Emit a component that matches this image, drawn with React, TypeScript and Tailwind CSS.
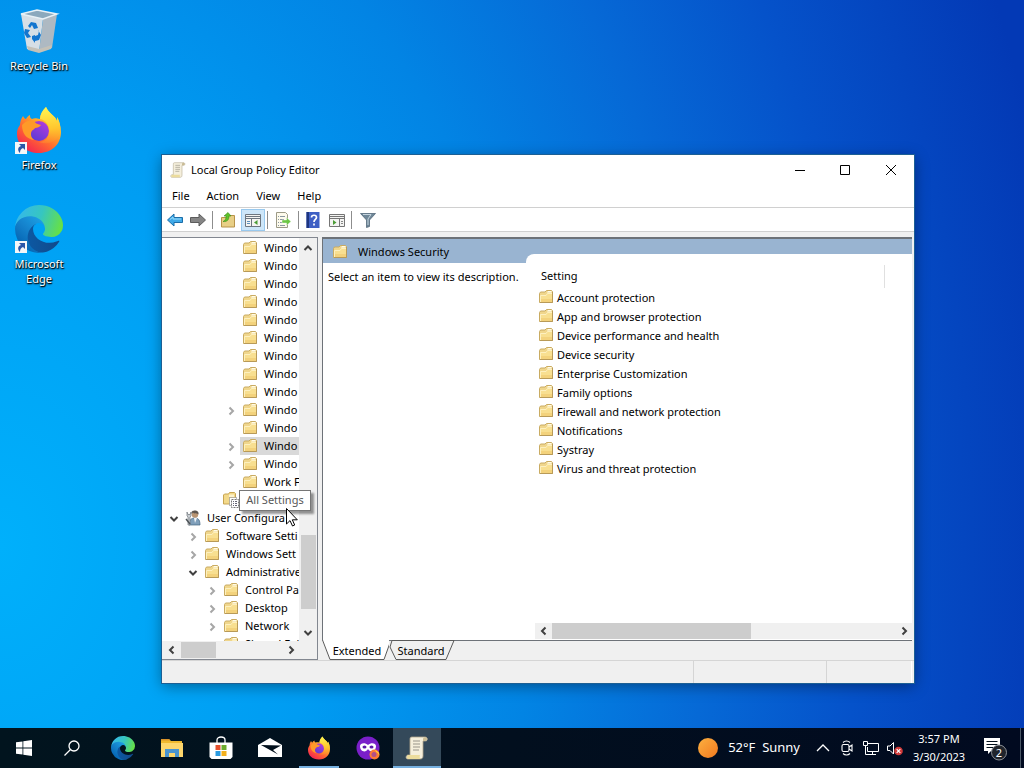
import React from "react";

type IconProps = { className?: string };

const FolderIcon: React.FC<IconProps> = ({ className }) => (
  <svg viewBox="0 0 16 16" className={className} aria-hidden="true">
    <path d="M1.500 13.500V4.500L2.500 3H7l1.500-1.500h5l1 1v11z" fill="#f0d68c" stroke="#c9ab62" />
    <path d="M9 3.500 10 2h3.500v1.500z" fill="#fffbe8" />
    <path d="M2 6h6l1.500-2H14v9H2z" fill="#f8df90" />
    <path d="M2 10h12v3H2z" fill="#f3d27c" />
    <path d="M2.500 13V6.500H8L9.500 4.500H14" fill="none" stroke="#fdf0bf" />
    <path d="M2 13.500h12.500V3" fill="none" stroke="#b89a58" />
  </svg>
);

const AllSettingsIcon: React.FC<IconProps> = ({ className }) => (
  <svg viewBox="0 0 16 16" className={className} aria-hidden="true">
    <path d="M.5 12V3l1-1h4l1-1.500h5l1 1v10.500z" fill="#f3d98a" stroke="#c8a552" />
    <path d="M6 2.500h5V5H6z" fill="#fdf3cc" />
    <path d="M6.500 5.500h7v8h-7z" fill="#fff" stroke="#777" strokeDasharray="1 1" />
    <path d="M8.500 7.500h7v8h-7z" fill="#fff" stroke="#777" strokeDasharray="2 1" />
    <path d="M10 9.500h1m1 0h2m-4 2h1m1 0h2m-4 2h1m1 0h2" stroke="#667" />
  </svg>
);

const UserIcon: React.FC<IconProps> = ({ className }) => (
  <svg viewBox="0 0 16 16" className={className} aria-hidden="true">
    <path d="M4 15c0-5 2-7 6-7s5 3 5 7z" fill="#7f9fba" stroke="#44647f" strokeWidth=".7" />
    <path d="m9 8 1 5 2-5z" fill="#f0f4f8" />
    <circle cx="10" cy="4.500" r="3.200" fill="#b99573" />
    <path d="M6.500 4C6 1 8 .5 10 .5s4 1 3.500 4C12.500 3 9 4 8 2.500z" fill="#5d5650" />
    <path d="M2 2v4l1 1v8h2V7l1-1V2L5 4.500H3z" fill="#c9ced3" stroke="#70777d" strokeWidth=".7" />
    <path d="M1 9l4 5" stroke="#4d5357" strokeWidth="1.500" />
  </svg>
);

const ScrollIcon: React.FC<IconProps> = ({ className }) => (
  <svg viewBox="0 0 24 24" className={className} aria-hidden="true">
    <path d="M7 1h13c3 0 3 4 .5 4H18v15c0 2-1 3-3 3H3c-3 0-2-4 0-4h2V4c0-2 0-3 2-3z" fill="#f5efdc" stroke="#b0a58a" strokeWidth=".8" />
    <path d="M18 5V3c0-2 4-2.500 4 0 0 1.500-1 2-2 2z" fill="#c9bb95" />
    <path d="M2 21c0-1.500 1-2 2-2h11c-1 2 0 4 1 4H4c-1 0-2-.5-2-2z" fill="#ecdc9c" />
    <path d="M8 5h7M8 8h7M8 11h7M8 14h6" stroke="#99958a" />
  </svg>
);

const EdgeIcon: React.FC<IconProps & { id: string }> = ({ className, id }) => (
  <svg viewBox="0 0 256 256" className={className} aria-hidden="true">
    <defs>
      <linearGradient id={`${id}-a`} x1="63" y1="177" x2="241" y2="177" gradientUnits="userSpaceOnUse">
        <stop offset="0" stopColor="#0c59a4" />
        <stop offset="1" stopColor="#114a8b" />
      </linearGradient>
      <linearGradient id={`${id}-b`} x1="157" y1="100" x2="45" y2="221" gradientUnits="userSpaceOnUse">
        <stop offset="0" stopColor="#1b9de2" />
        <stop offset=".5" stopColor="#1582cc" />
        <stop offset="1" stopColor="#0667b5" />
      </linearGradient>
      <linearGradient id={`${id}-c`} x1="20" y1="60" x2="245" y2="135" gradientUnits="userSpaceOnUse">
        <stop offset="0" stopColor="#35b9e8" />
        <stop offset=".5" stopColor="#36c6c0" />
        <stop offset="1" stopColor="#66e047" />
      </linearGradient>
    </defs>
    <g transform="translate(-4.630 -4.920)">
      <path fill={`url(#${id}-a)`} d="M235.680 195.460a93.730 93.730 0 0 1-10.540 4.710 101.870 101.870 0 0 1-35.900 6.460c-47.320 0-88.540-32.550-88.540-74.320A31.480 31.480 0 0 1 117.130 105c-42.800 1.800-53.800 46.400-53.800 72.530 0 73.880 68.090 81.370 82.760 81.370 7.910 0 19.840-2.300 27-4.560l1.310-.44A128.340 128.340 0 0 0 241 200.100a4 4 0 0 0-5.320-4.640z" />
      <path fill={`url(#${id}-b)`} d="M110.340 246.340A79.200 79.200 0 0 1 87.600 225a80.720 80.720 0 0 1 29.530-120c3.120-1.470 8.450-4.130 15.540-4a32.350 32.350 0 0 1 25.690 13 31.880 31.880 0 0 1 6.360 18.660c0-.21 24.460-79.600-80-79.600-43.900 0-80 41.660-80 78.210a130.150 130.150 0 0 0 12.110 56 128 128 0 0 0 156.380 67.110 75.550 75.550 0 0 1-62.780-8z" />
      <path fill={`url(#${id}-c)`} d="M156.940 153.780c-.81 1.050-3.300 2.500-3.300 5.660 0 2.610 1.700 5.120 4.720 7.230 14.380 10 41.490 8.680 41.560 8.680a59.560 59.560 0 0 0 30.270-8.350 61.380 61.380 0 0 0 30.440-52.870c.26-22.410-8-37.310-11.340-43.910C228.080 28.760 182.310 4.920 132.650 4.920a128 128 0 0 0-128 126.200c.48-36.540 36.800-66.050 80-66.050 3.500 0 23.460.34 42 10.070 16.340 8.580 24.900 18.940 30.850 29.210 6.180 10.670 7.280 24.150 7.280 29.520s-2.780 13.330-7.840 19.910z" />
    </g>
  </svg>
);

const FirefoxIcon: React.FC<IconProps & { id: string }> = ({ className, id }) => (
  <svg viewBox="0 0 48 48" className={className} aria-hidden="true">
    <defs>
      <linearGradient id={`${id}-a`} x1="40" y1="4" x2="12" y2="44" gradientUnits="userSpaceOnUse">
        <stop offset="0" stopColor="#fff44f" />
        <stop offset=".35" stopColor="#ffb02a" />
        <stop offset=".65" stopColor="#ff6a30" />
        <stop offset="1" stopColor="#f5284f" />
      </linearGradient>
      <linearGradient id={`${id}-b`} x1="30" y1="15" x2="18" y2="34" gradientUnits="userSpaceOnUse">
        <stop offset="0" stopColor="#b33bdc" />
        <stop offset="1" stopColor="#5b3bd6" />
      </linearGradient>
      <linearGradient id={`${id}-c`} x1="32" y1="2" x2="38" y2="44" gradientUnits="userSpaceOnUse">
        <stop offset="0" stopColor="#fff44f" />
        <stop offset=".5" stopColor="#ffc62e" />
        <stop offset="1" stopColor="#ff7a2b" stopOpacity="0" />
      </linearGradient>
    </defs>
    <path fill={`url(#${id}-a)`} d="M31 1c-4 4-6 8-6 12-4-1-6-1-8 0-2-1-2-2-2-4-2 1-3 2-4 4-1 0-2-1-3-3-2 3-3 6-3 9-3 4-3 7-3 9 0 11 9 19 22 19s22-9 22-21c0-6-2-11-4-14v4C41 10 33 7 31 1z" />
    <circle cx="24" cy="25" r="10" fill={`url(#${id}-b)`} />
    <path fill="#ff9a28" d="M7 19c3-4 7-5 12-4 1 2 3 3 7 4-1 2-4 3-6 3-1 2-4 2-4 6 0 3 1 4 3 6C11 33 7 27 7 19z" />
    <path fill={`url(#${id}-c)`} d="M31 1c-4 4-6 8-6 12 6 1 9 6 9 12 0 7-4 11-10 11 11 4 20-2 21-11 1-6-1-11-3-14v4C41 10 33 7 31 1z" />
  </svg>
);

const RecycleBinIcon: React.FC<IconProps> = ({ className }) => (
  <svg viewBox="0 0 48 48" className={className} aria-hidden="true">
    <path d="M6 7 28 12 24 45 12 42z" fill="#d6dfe6" />
    <path d="m28 12 14-5-5 34-13 4z" fill="#aeb9c2" />
    <path d="m6 7 16-4 20 4-14 5z" fill="#8ba9bd" stroke="#e8f1f6" strokeWidth="1.500" />
    <path d="m12 39 12 3 13-4-1 4-12 4-11-3z" fill="#c4c1b8" />
    <g fill="#1376cf">
      <path d="m13 19 3-4 5 1 2 5-4 1-2-4-2 3z" />
      <path d="m10 22 5 1-2 3 3 4-4 1-3-5z" />
      <path d="m17 29 3-1v1l3-1 1-4-1-1 3 5-2 5-4 1v2l-3-4z" />
    </g>
  </svg>
);

const ShortcutArrow: React.FC = () => (
  <svg viewBox="0 0 12 12" className="absolute bottom-0 left-0 size-3" aria-hidden="true">
    <path d="M0 0h12v12H0z" fill="#f4f6f8" />
    <path d="M4 2h6v6L8 6c-2 1-3 2-3 5-3-3-2-6 1-7z" fill="#2a56a8" />
  </svg>
);

type ChevronProps = { dir: "left" | "right" | "up" | "down"; faded?: boolean };

const chevronPaths = {
  left: "M6.500 1.500 3 5l3.500 3.500",
  right: "M3.500 1.500 7 5 3.500 8.500",
  up: "M1.500 7 5 3.500 8.500 7",
  down: "M1.500 3 5 6.500 8.500 3",
};

const Chevron: React.FC<ChevronProps> = ({ dir, faded }) => (
  <svg viewBox="0 0 10 10" className="size-[10px]" aria-hidden="true">
    <path d={chevronPaths[dir]} fill="none" stroke={faded ? "#a6a6a6" : "#404040"} strokeWidth="2" />
  </svg>
);

interface TreeNode {
  label: string;
  level: number;
  state?: "open" | "closed";
  icon?: "user" | "all";
  selected?: boolean;
}

const windo: TreeNode = { label: "Windo", level: 3 };

const treeNodes: TreeNode[] = [
  windo,
  windo,
  windo,
  windo,
  windo,
  windo,
  windo,
  windo,
  windo,
  { ...windo, state: "closed" },
  windo,
  { ...windo, state: "closed", selected: true },
  { ...windo, state: "closed" },
  { label: "Work F", level: 3 },
  { label: "All Settings", level: 2, icon: "all" },
  { label: "User Configura", level: 0, state: "open", icon: "user" },
  { label: "Software Setti", level: 1, state: "closed" },
  { label: "Windows Sett", level: 1, state: "closed" },
  { label: "Administrative", level: 1, state: "open" },
  { label: "Control Pa", level: 2, state: "closed" },
  { label: "Desktop", level: 2, state: "closed" },
  { label: "Network", level: 2, state: "closed" },
  { label: "Shared Fol", level: 2 },
];

const indents = ["pl-[2px]", "pl-[21px]", "pl-[40px]", "pl-[59px]"];

const settings = [
  "Account protection",
  "App and browser protection",
  "Device performance and health",
  "Device security",
  "Enterprise Customization",
  "Family options",
  "Firewall and network protection",
  "Notifications",
  "Systray",
  "Virus and threat protection",
];

const TreeRow: React.FC<{ node: TreeNode }> = ({ node }) => (
  <li className={`flex h-[18px] shrink-0 whitespace-nowrap ${indents[node.level]}`}>
    <span className="flex w-[19px] shrink-0 items-center justify-center pt-[2px]">
      {node.state && <Chevron dir={node.state === "open" ? "down" : "right"} faded={node.state === "closed"} />}
    </span>
    <span className={`flex flex-1 items-center gap-[6px] pl-[2px] ${node.selected ? "bg-[#d9d9d9]" : ""}`}>
      {node.icon === "user" ? (
        <UserIcon className="size-4 shrink-0" />
      ) : node.icon === "all" ? (
        <AllSettingsIcon className="size-4 shrink-0" />
      ) : (
        <FolderIcon className="size-4 shrink-0" />
      )}
      {/* the tooltip shows this row's label in full */}
      {node.icon !== "all" && node.label}
    </span>
  </li>
);

const ToolbarSeparator = () => <span className="mx-[2px] h-[18px] w-px bg-[#8d8d8d]" />;

const Toolbar: React.FC = () => (
  <div className="flex h-[25px] shrink-0 items-center border-y border-[#d0d0d0] bg-white px-[2px] pt-px">
    <button aria-label="Back" className="flex w-[22px] justify-center">
      <svg viewBox="0 0 16 16" className="size-4">
        <path d="M.5 8 7 2v3.500h8.500v5H7V14z" fill="#3fa9e8" stroke="#1b6da8" />
        <path d="m3 7.500 3-2.500v2h8" fill="none" stroke="#9bdcfa" />
      </svg>
    </button>
    <button aria-label="Forward" className="flex w-6 justify-center">
      <svg viewBox="0 0 16 16" className="size-4">
        <path d="M15.500 8 9 2v3.500H.5v5H9V14z" fill="#858585" stroke="#5c5c5c" />
      </svg>
    </button>
    <ToolbarSeparator />
    <button aria-label="Up one level" className="flex w-[26px] justify-center">
      <svg viewBox="0 0 16 16" className="size-4">
        <path d="M1.500 15V5.500H7l1.500-2h6V15z" fill="#e8cf86" stroke="#b8934a" />
        <path d="M3 9.500C6 8 6 6 6 4H4l4-3.500L11 4H9c0 3-1 6-6 5.500z" fill="#5ec22a" stroke="#3a8d18" strokeWidth=".6" />
      </svg>
    </button>
    <button aria-label="Show/Hide Console Tree" className="flex h-[22px] w-6 items-center justify-center border border-[#99c9ee] bg-[#cde6f9]">
      <svg viewBox="0 0 16 16" className="size-4">
        <path d="M.5 2.500h15v12H.5z" fill="#f4f4f2" stroke="#6d7680" />
        <path d="M1 4.500h14M1 6.500h14M6.500 7v7" stroke="#6d7680" />
        <path d="M2 9.500h3m-3 2h3" stroke="#5c90bd" />
        <path d="M12.500 8v5L9 10.500z" fill="#4b9c35" />
      </svg>
    </button>
    <ToolbarSeparator />
    <button aria-label="Export List" className="flex w-[26px] justify-center">
      <svg viewBox="0 0 16 16" className="size-4">
        <path d="M1.500.500h9l2 2v13h-11z" fill="#fdfaec" stroke="#9c9a86" />
        <path d="M3 4.500h1m1 0h5m-7 3h1m1 0h4m-6 3h1m1 0h4m-6 3h1m1 0h5" stroke="#8a97a0" />
        <path d="M7 8h4.500V5.500L16 9.500l-4.500 4V11H7z" fill="#6cc644" stroke="#fff" strokeWidth=".4" />
      </svg>
    </button>
    <ToolbarSeparator />
    <button aria-label="Help" className="flex w-6 justify-center">
      <svg viewBox="0 0 16 16" className="size-4">
        <path d="M1.500 0h13v16h-13z" fill="#3f60c4" />
        <path d="M1.500 0h2.500v16H1.500z" fill="#1d3580" />
        <path d="M6.500 5.500c0-3 5-3 5 0 0 2-2.500 2-2.500 4.500M9 11.500v2" fill="none" stroke="#fff" strokeWidth="1.700" />
      </svg>
    </button>
    <button aria-label="Show/Hide Action Pane" className="flex w-6 justify-center">
      <svg viewBox="0 0 16 16" className="size-4">
        <path d="M.5 2.500h15v12H.5z" fill="#f4f4f2" stroke="#757575" />
        <path d="M1 4.500h14M1 6.500h14M10.500 7v7" stroke="#757575" />
        <path d="M12 9.500h2m-2 2h2" stroke="#888" />
        <path d="M4 8v5l3.500-2.500z" fill="#4b9c35" />
      </svg>
    </button>
    <ToolbarSeparator />
    <button aria-label="Filter" className="flex w-[28px] justify-center">
      <svg viewBox="0 0 16 16" className="size-4">
        <path d="M.5 1.500h15L9.500 8v6.500l-3 1V8z" fill="#6f8798" stroke="#53687a" strokeWidth=".8" />
        <path d="M3 2.500h8L8 7v6" fill="none" stroke="#c5d4de" />
      </svg>
    </button>
  </div>
);

const TreePane: React.FC = () => (
  <div className="relative flex w-[156px] shrink-0 flex-col border-y border-r border-[#828790] bg-white">
    <div className="flex min-h-0 flex-1">
      <ul className="flex min-w-0 flex-1 flex-col overflow-hidden pt-px">
        {treeNodes.map((node, i) => (
          <TreeRow key={i} node={node} />
        ))}
      </ul>
      <div className="flex w-[18px] flex-col items-center bg-[#f0f0f0]">
        <button aria-label="Scroll up" className="flex h-5 items-center">
          <Chevron dir="up" />
        </button>
        <div className="w-[15px] flex-[278]" />
        <div className="w-[15px] flex-[74] bg-[#cdcdcd]" />
        <div className="w-[15px] flex-[16]" />
        <button aria-label="Scroll down" className="flex h-4 items-center">
          <Chevron dir="down" />
        </button>
      </div>
    </div>
    <div className="flex h-[18px] items-center bg-[#f0f0f0]">
      <button aria-label="Scroll left" className="flex h-full w-[19px] items-center justify-center">
        <Chevron dir="left" />
      </button>
      <div className="h-4 w-[35px] bg-[#cdcdcd]" />
      <div className="flex-1" />
      <button aria-label="Scroll right" className="mr-[17px] flex h-full w-[18px] items-center justify-center">
        <Chevron dir="right" />
      </button>
    </div>
    <div role="tooltip" className="absolute top-[252px] left-[77px] flex h-[21px] w-[72px] items-center justify-center border border-[#767676] bg-white pb-[2px] whitespace-nowrap text-[#575757] shadow-[3px_3px_2px_rgba(0,0,0,0.4)]">
      All Settings
    </div>
    <svg viewBox="0 0 12 19" className="absolute top-[270px] left-[124px] h-[19px] w-3" aria-hidden="true">
      <path d="M.5.500v15.500l3.500-3.400 2.500 5.400 2.200-1-2.400-5.200h5z" fill="#fff" stroke="#000" />
    </svg>
  </div>
);

const DetailPane: React.FC = () => (
  <div className="flex min-w-0 flex-1 flex-col">
    <div className="flex min-h-0 flex-1 border-t-2 border-l border-[#6d7278] bg-white">
      <section className="w-[203px] shrink-0 whitespace-nowrap">
        <h2 className="flex h-[24px] items-center gap-[10px] bg-[#99b4d1] pt-px pl-[9px]">
          <FolderIcon className="size-4" />
          Windows Security
        </h2>
        <p className="py-[6px] pl-[5px]">Select an item to view its description.</p>
      </section>
      <section className="flex min-w-0 flex-1 flex-col bg-[#99b4d1] pt-[15px]">
        <div className="flex flex-1 flex-col rounded-tl-lg bg-white pt-[11px] pl-[9px]">
          <table className="w-full text-left">
            <thead>
              <tr className="h-[23px]">
                <th className="border-r border-[#e0e0e0] pb-[2px] pl-[6px] font-normal">Setting</th>
                <th className="w-[28px]" aria-label="State" />
              </tr>
            </thead>
            <tbody>
              {settings.map((name) => (
                <tr key={name} className="h-[19px]">
                  <td colSpan={2}>
                    <span className="flex items-center gap-[3px] pl-[3px]">
                      <FolderIcon className="mb-[2px] size-4" />
                      {name}
                    </span>
                  </td>
                </tr>
              ))}
            </tbody>
          </table>
          <div className="mt-auto mb-px flex h-4 items-center bg-[#f0f0f0]">
            <button aria-label="Scroll left" className="flex h-full w-[17px] items-center justify-center">
              <Chevron dir="left" />
            </button>
            <div className="h-full flex-[199] bg-[#cdcdcd]" />
            <div className="flex-[144]" />
            <button aria-label="Scroll right" className="flex h-full w-[17px] items-center justify-center">
              <Chevron dir="right" />
            </button>
          </div>
        </div>
      </section>
    </div>
    <div role="tablist" className="flex h-[20px] border-t border-[#6d7278]">
      <button role="tab" aria-selected="true" className="relative -mt-px flex h-5 w-[67px] items-center justify-center">
        <svg viewBox="0 0 67 20" className="absolute inset-0 size-full" aria-hidden="true">
          <path d="M0 0h69l-7 19.500H8z" fill="#fff" />
          <path d="M.5 0 8 19.500h54L69 0" fill="none" stroke="#5a5a5a" />
        </svg>
        <span className="relative pt-[2px] pl-[3px]">Extended</span>
      </button>
      <button role="tab" aria-selected="false" className="relative -mt-px flex h-5 w-[66px] items-center justify-center">
        <svg viewBox="0 0 66 20" className="absolute inset-0 size-full" aria-hidden="true">
          <path d="M3 .500 1 7l6 12.500h50L65 .500z" fill="#f0f0f0" stroke="#5a5a5a" />
        </svg>
        <span className="relative pt-[2px] pr-[2px]">Standard</span>
      </button>
    </div>
  </div>
);

const PolicyWindow: React.FC = () => (
  <main className="absolute top-[155px] right-[110px] bottom-[45px] left-[162px] flex flex-col bg-[#f0f0f0] text-[11px] leading-4 text-black shadow-[0_0_0_1px_#1c5f94,0_3px_14px_rgba(0,0,0,0.4)]">
    <header className="flex h-[30px] shrink-0 items-center bg-white pl-2">
      <ScrollIcon className="mr-[5px] size-4" />
      <h1>Local Group Policy Editor</h1>
      <div className="ml-auto flex h-full">
        <button aria-label="Minimize" className="flex w-[45px] items-center justify-center">
          <svg viewBox="0 0 10 10" className="size-[10px]">
            <path d="M0 5.500h10" stroke="#000" />
          </svg>
        </button>
        <button aria-label="Maximize" className="flex w-[46px] items-center justify-center">
          <svg viewBox="0 0 10 10" className="size-[10px]">
            <path d="M.5.500h9v9h-9z" fill="none" stroke="#000" />
          </svg>
        </button>
        <button aria-label="Close" className="flex w-[46px] items-center justify-center">
          <svg viewBox="0 0 10 10" className="size-[10px]">
            <path d="m0 0 10 10M10 0 0 10" stroke="#000" />
          </svg>
        </button>
      </div>
    </header>
    <nav className="flex h-[22px] shrink-0 items-center gap-[17px] bg-white pl-[10px]">
      <button>File</button>
      <button>Action</button>
      <button>View</button>
      <button>Help</button>
    </nav>
    <Toolbar />
    <div className="mt-[5px] flex min-h-0 flex-1 gap-[4px] pr-[2px]">
      <TreePane />
      <DetailPane />
    </div>
    <footer className="flex h-[23px] shrink-0 border-t border-[#d5d5d5]">
      <span className="flex-1 border-r border-[#d5d5d5]" />
      <span className="w-[133px] border-r border-[#d5d5d5]" />
      <span className="mr-[2px] w-[85px] border-r border-white" />
    </footer>
  </main>
);

const DesktopIcon: React.FC<{ label: string; shortcut?: boolean; children: React.ReactNode }> = ({ label, shortcut, children }) => (
  <li className="h-[99px]">
    <button className="flex w-[76px] flex-col items-center">
      <span className="relative size-12">
        {children}
        {shortcut && <ShortcutArrow />}
      </span>
      <span className="mt-[3px] w-[70px] text-center text-[11px] leading-[15px] text-white [text-shadow:0_1px_2px_#000,1px_1px_1px_#000]">
        {label}
      </span>
    </button>
  </li>
);

const taskButton = "relative flex h-full w-[49px] items-center justify-center";

const Taskbar: React.FC = () => (
  <footer className="flex h-10 shrink-0 items-center bg-linear-to-r from-[#01141e] via-[#020f1e] to-[#010a20] text-white">
    <button aria-label="Start" className="flex h-full w-12 items-center justify-center">
      <svg viewBox="0 0 16 16" className="size-4" fill="#fff">
        <path d="m0 2.300 6.500-.9v6.200H0zM7.300 1.300 16 0v7.600H7.300zM0 8.400h6.500v6.200L0 13.700zM7.300 8.400H16V16l-8.700-1.200z" />
      </svg>
    </button>
    <button aria-label="Search" className="mr-[2px] flex h-full w-12 items-center justify-center">
      <svg viewBox="0 0 16 16" className="size-4" fill="none" stroke="#fff" strokeWidth="1.300">
        <circle cx="10" cy="6" r="5" />
        <path d="M6.500 9.500.5 15.500" />
      </svg>
    </button>
    <button aria-label="Microsoft Edge" className={taskButton}>
      <EdgeIcon id="edge-task" className="size-6" />
    </button>
    <button aria-label="File Explorer" className={taskButton}>
      <svg viewBox="0 0 24 24" className="size-6">
        <path d="M1 3h8l2 2h11v16H1z" fill="#f0b92f" />
        <path d="M1 7h22v14H1z" fill="#fdd66c" />
        <path d="M1 3h8l1 1.500H1z" fill="#d9932a" />
        <path d="M5 21v-8h14v8h-4v-4H9v4z" fill="#4a94cf" />
      </svg>
    </button>
    <button aria-label="Microsoft Store" className={taskButton}>
      <svg viewBox="0 0 24 24" className="size-6">
        <path d="M8 7V4c0-4 8-4 8 0v3" fill="none" stroke="#fff" strokeWidth="1.300" />
        <path d="M.5 6.500h23V21l-2 2h-19l-2-2z" fill="#fff" />
        <path d="M6.500 9h5v5h-5z" fill="#e5502d" />
        <path d="M12.500 9h5v5h-5z" fill="#6cab2e" />
        <path d="M6.500 15h5v5h-5z" fill="#2b9be0" />
        <path d="M12.500 15h5v5h-5z" fill="#f2b01e" />
      </svg>
    </button>
    <button aria-label="Mail" className={taskButton}>
      <svg viewBox="0 0 24 24" className="size-6">
        <path d="M0 9 12 2l12 7v12H0z" fill="#fff" />
        <path d="m3 9 20 .5-8 4.500 5 4.500z" fill="#02101c" />
      </svg>
    </button>
    <button aria-label="Firefox" className={taskButton}>
      <FirefoxIcon id="ff-task" className="size-6" />
      <span className="absolute bottom-0 h-[2px] w-10 bg-[#76b0e0]" />
    </button>
    <button aria-label="Firefox Private Browsing" className={taskButton}>
      <svg viewBox="0 0 24 24" className="size-6">
        <circle cx="12" cy="12" r="11.500" fill="#7a1fc9" />
        <path d="M4 10c0-3 5-4 8-1 3-3 8-2 8 1 0 6-6 7-8 3-2 4-8 3-8-3z" fill="#fff" />
        <ellipse cx="8.500" cy="11" rx="2" ry="1.500" fill="#5a18a8" />
        <ellipse cx="15.500" cy="11" rx="2" ry="1.500" fill="#5a18a8" />
        <circle cx="18.500" cy="18.500" r="5" fill="#ff7a33" />
        <circle cx="18" cy="18.500" r="2.500" fill="#b0508a" />
        <path d="M19 13c1 3 5 2 4 7 0-4-4-3-4-7z" fill="#ffd63b" />
      </svg>
    </button>
    <button aria-label="Local Group Policy Editor" className="relative ml-px flex h-full w-12 items-center justify-center bg-[#34495a]">
      <ScrollIcon className="size-6" />
      <span className="absolute bottom-0 h-[2px] w-full bg-[#76b0e0]" />
    </button>

    <div className="ml-auto flex h-full items-center">
      <button className="mr-[11px] flex items-center gap-[10px] text-[13px]">
        <span className="size-5 rounded-full bg-linear-to-br from-[#fbb040] to-[#f0781e]" />
        <span className="whitespace-pre">52°F  Sunny</span>
      </button>
      <button aria-label="Show hidden icons" className="flex w-[24px] justify-center">
        <svg viewBox="0 0 14 14" className="size-[14px]" fill="none" stroke="#fff" strokeWidth="1.300">
          <path d="m1 10 6-6 6 6" />
        </svg>
      </button>
      <button aria-label="Meet Now" className="flex w-[24px] justify-center">
        <svg viewBox="0 0 16 16" className="size-4" fill="none" stroke="#fff" strokeWidth="1.100">
          <rect x="3" y="4.500" width="7" height="7" rx="1.500" />
          <path d="m10 7 3-2v6l-3-2M4 2.500c2-2 5-2 7 0M4 13.500c2 2 5 2 7 0" />
        </svg>
      </button>
      <button aria-label="Network" className="flex w-[24px] justify-center">
        <svg viewBox="0 0 16 16" className="size-4" fill="none" stroke="#fff">
          <path d="M5 3.500h10.500v8h-11V7M6 14.500h7M9.500 12v2M.5 1.500h4v4h-4zM2.500 6v8.500H6" />
        </svg>
      </button>
      <button aria-label="Volume muted" className="mr-[2px] flex w-[24px] justify-center">
        <svg viewBox="0 0 16 16" className="size-4">
          <path d="M.5 6v4.500H3L6.500 14V2.500L3 6z" fill="none" stroke="#fff" />
          <circle cx="11.500" cy="11" r="4.300" fill="#d13a3a" />
          <path d="m9.700 9.200 3.600 3.600m0-3.600-3.600 3.600" stroke="#fff" strokeWidth="1.200" />
        </svg>
      </button>
      <button className="w-[60px] text-center text-[11px] leading-[18px] whitespace-nowrap">
        3:57 PM
        <br />
        3/30/2023
      </button>
      <button aria-label="2 new notifications" className="mr-[12px] ml-[13px] flex">
        <svg viewBox="0 0 26 26" className="size-[26px]">
          <path d="M2 3h16v13H9l-3 3v-3H2z" fill="#fff" />
          <path d="M4.500 6.500h11m-11 3h11m-11 3h8" stroke="#02101c" />
          <circle cx="17" cy="17.500" r="7.500" fill="#20242c" stroke="#8c9096" />
          <text x="17" y="21.500" textAnchor="middle" fontSize="11" fill="#fff">
            2
          </text>
        </svg>
      </button>
      <button aria-label="Show desktop" className="h-full w-1 border-l border-[#4a5766]" />
    </div>
  </footer>
);

const App: React.FC = () => {
  return (
    <div className="flex h-screen flex-col overflow-hidden font-['Noto_Sans',sans-serif]">
      <div className="relative min-h-0 flex-1 bg-[radial-gradient(ellipse_105%_200%_at_0%_75%,#00b0fb_0%,#009cf2_30%,#0284e4_50%,#0669d6_66%,#0552ca_80%,#0339b5_100%)]">
        <ul className="flex flex-col pt-[7px] pl-px">
          <DesktopIcon label="Recycle Bin">
            <RecycleBinIcon className="size-12" />
          </DesktopIcon>
          <DesktopIcon label="Firefox" shortcut>
            <FirefoxIcon id="ff-desk" className="size-12" />
          </DesktopIcon>
          <DesktopIcon label="Microsoft Edge" shortcut>
            <EdgeIcon id="edge-desk" className="size-12" />
          </DesktopIcon>
        </ul>
        <PolicyWindow />
      </div>
      <Taskbar />
    </div>
  );
};

export default App;
